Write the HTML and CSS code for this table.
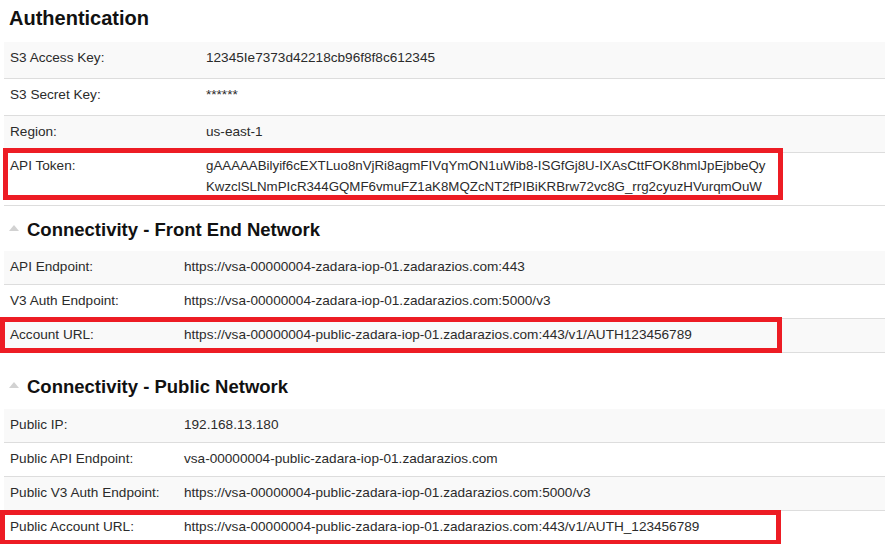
FILE: index.html
```html
<!DOCTYPE html>
<html lang="en">
<head>
<meta charset="utf-8">
<title>Authentication</title>
<link rel="stylesheet" href="styles.css">
</head>
<body>
<main class="page">
  <h2 class="title">Authentication</h2>
  <div class="table auth">
    <div class="row"><div class="label">S3 Access Key:</div><div class="value">12345Ie7373d42218cb96f8f8c612345</div></div>
    <div class="row"><div class="label">S3 Secret Key:</div><div class="value">******</div></div>
    <div class="row"><div class="label">Region:</div><div class="value">us-east-1</div></div>
    <div class="row token">
      <div class="label">API Token:</div>
      <div class="value">
        <div class="line">gAAAAABilyif6cEXTLuo8nVjRi8agmFIVqYmON1uWib8-ISGfGj8U-IXAsCttFOK8hmlJpEjbbeQy</div>
        <div class="line">KwzclSLNmPIcR344GQMF6vmuFZ1aK8MQZcNT2fPIBiKRBrw72vc8G_rrg2cyuzHVurqmOuW</div>
      </div>
      <span class="mark mark-token"></span>
    </div>
  </div>

  <h3 class="section section-front"><span class="caret"></span>Connectivity - Front End Network</h3>
  <div class="table net">
    <div class="row"><div class="label">API Endpoint:</div><div class="value">https://vsa-00000004-zadara-iop-01.zadarazios.com:443</div></div>
    <div class="row"><div class="label">V3 Auth Endpoint:</div><div class="value">https://vsa-00000004-zadara-iop-01.zadarazios.com:5000/v3</div></div>
    <div class="row"><div class="label">Account URL:</div><div class="value">https://vsa-00000004-public-zadara-iop-01.zadarazios.com:443/v1/AUTH123456789</div><span class="mark mark-account"></span></div>
  </div>

  <h3 class="section section-public"><span class="caret"></span>Connectivity - Public Network</h3>
  <div class="table net">
    <div class="row"><div class="label">Public IP:</div><div class="value">192.168.13.180</div></div>
    <div class="row"><div class="label">Public API Endpoint:</div><div class="value">vsa-00000004-public-zadara-iop-01.zadarazios.com</div></div>
    <div class="row"><div class="label">Public V3 Auth Endpoint:</div><div class="value">https://vsa-00000004-public-zadara-iop-01.zadarazios.com:5000/v3</div></div>
    <div class="row"><div class="label">Public Account URL:</div><div class="value">https://vsa-00000004-public-zadara-iop-01.zadarazios.com:443/v1/AUTH_123456789</div><span class="mark mark-public"></span></div>
  </div>
</main>
</body>
</html>
```
FILE: styles.css
```css
html, body {
  margin: 0;
  padding: 0;
  background: #ffffff;
}

body {
  font-family: "Liberation Sans", Arial, sans-serif;
  color: #2b2b2b;
  font-size: 13.6px;
  overflow: hidden;
}

.page {
  padding-left: 4px;
}

.title {
  margin: 0;
  padding: 6px 0 12px 5px;
  font-size: 20px;
  line-height: 24px;
  font-weight: bold;
  color: #111111;
}

.table {
  display: flex;
  flex-direction: column;
}

.row {
  position: relative;
  display: grid;
  align-items: start;
  padding: 8px 0 10px 6px;
  line-height: 15px;
  border-bottom: 1px solid #dddddd;
  background: #ffffff;
  white-space: nowrap;
}

.row:nth-child(odd) {
  background: #f9f9f9;
}

.auth .row {
  grid-template-columns: 196px 1fr;
  padding-bottom: 13px;
}

.net .row {
  grid-template-columns: 174px 1fr;
}

.auth .row.token {
  padding: 2px 0 8px 6px;
  line-height: 21px;
}

.token .value {
  font-size: 13.3px;
}

.section {
  display: flex;
  align-items: flex-start;
  margin: 0;
  padding-left: 5px;
  font-size: 18.5px;
  line-height: 22px;
  font-weight: bold;
  color: #111111;
}

.section-front {
  margin: 13px 0 10px;
}

.section-public {
  margin: 23px 0 11px;
}

.caret {
  width: 0;
  height: 0;
  margin: 6px 8px 0 0;
  border-left: 5.5px solid transparent;
  border-right: 5.5px solid transparent;
  border-bottom: 6px solid #d2d2d2;
}

.mark {
  position: absolute;
  box-sizing: border-box;
  border: 5px solid #ed1c24;
  pointer-events: none;
}

.mark-token {
  left: -1px;
  top: -5px;
  width: 780px;
  height: 52px;
}

.mark-account {
  left: -4px;
  top: -2px;
  width: 782px;
  height: 36px;
}

.mark-public {
  left: -4px;
  top: -1px;
  width: 781px;
  height: 35px;
}
```
